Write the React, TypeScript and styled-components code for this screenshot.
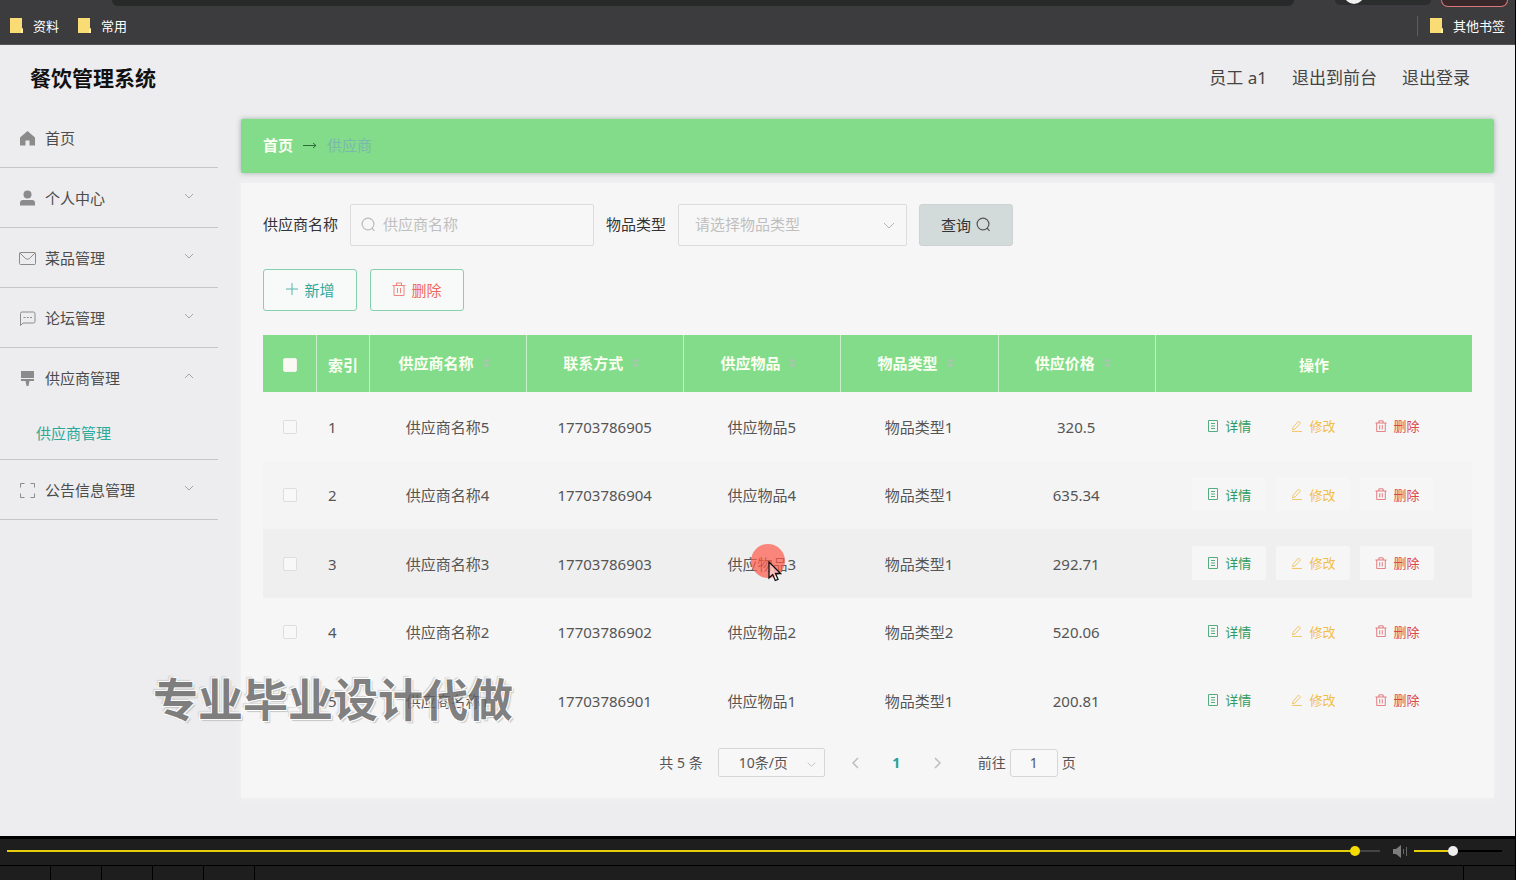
import React from 'react';
import styled, { createGlobalStyle, css } from 'styled-components';

const GlobalStyle = createGlobalStyle`
  *, *::before, *::after { box-sizing: border-box; }
  body { margin: 0; background: #edecee; }
  body, button, input, select {
    font-family: "Noto Sans", "Noto Sans CJK SC", sans-serif;
    font-size: 15px;
    color: #555;
  }
  button, a, select { cursor: pointer; }
  a { color: inherit; text-decoration: none; }
`;

const Screen = styled.div`
  display: flex;
  flex-direction: column;
  min-height: 100vh;
  border-right: 1px solid #000;
`;

/* ---------- browser bar ---------- */

const Browser = styled.header`
  background: #3c3b3d;
  border-bottom: 1px solid #555456;
`;

const AddressRow = styled.div`
  display: flex;
  align-items: flex-start;
  height: 7px;
  padding: 0 7px 0 112px;
  overflow: hidden;
`;

const AddressBar = styled.div`
  flex: 1;
  height: 6px;
  border-radius: 0 0 10px 10px;
  background: #282929;
`;

const ProfilePill = styled.div`
  display: flex;
  width: 96px;
  height: 5px;
  margin: 0 10px 0 41px;
  border-radius: 0 0 10px 10px;
  background: #2c2d2d;
`;

const Avatar = styled.span`
  width: 20px;
  height: 20px;
  margin: -16px 0 0 9px;
  border-radius: 50%;
  background: #f1f1f1;
`;

const UpdatePill = styled.div`
  width: 67px;
  height: 7px;
  border: 1px solid #d9777a;
  border-top: 0;
  border-radius: 0 0 12px 12px;
  background: #38282a;
`;

const Bookmarks = styled.nav`
  display: flex;
  align-items: center;
  gap: 19px;
  height: 37px;
  padding: 0 10px;
`;

const Bookmark = styled.a`
  display: flex;
  align-items: center;
  gap: 10px;
  font-size: 13px;
  line-height: 20px;
  color: #fff;
`;

const OtherBookmarks = styled.div`
  margin-left: auto;
  padding-left: 12px;
  border-left: 1px solid #5d5c5e;
`;

const FolderIcon = () => (
  <svg width="13" height="15" viewBox="0 0 13 15">
    <path d="M0 0h12v10l1 1v4H0z" fill="#f9dc74" />
    <path d="M11 12l2-2v5h-2z" fill="#fff0b0" />
  </svg>
);

/* ---------- app frame ---------- */

const Page = styled.div`
  position: relative;
  flex: 1;
  background: #edecee;
`;

const TopBar = styled.div`
  display: flex;
  align-items: center;
  justify-content: space-between;
  height: 63px;
  padding: 2px 45px 0 30px;
`;

const Title = styled.h1`
  margin: 0;
  font-size: 21px;
  line-height: 32px;
  color: #111;
`;

const UserLinks = styled.div`
  display: flex;
  gap: 25px;
  font-size: 17px;
  line-height: 24px;
  color: #444;
`;

const Columns = styled.div`
  display: flex;
  align-items: flex-start;
`;

const Sidebar = styled.nav`
  flex: 0 0 218px;
`;

const MenuGroup = styled.div`
  border-bottom: 1px solid #c6c6c7;
`;

const MenuItem = styled.a`
  display: flex;
  align-items: center;
  gap: 9px;
  height: 59px;
  padding: 0 24px 0 19px;
  color: #4c4c4c;
  line-height: 22px;

  svg:first-child { margin-top: 2px; }
`;

const MenuArrow = styled.svg<{ $open?: boolean }>`
  margin: 0 0 4px auto;
  transform: ${(p) => (p.$open ? 'rotate(180deg)' : 'none')};
`;

const SubItem = styled.a`
  display: flex;
  align-items: center;
  height: 52px;
  padding-left: 36px;
  color: #2ba99b;
  line-height: 22px;
`;

const Main = styled.main`
  flex: 1;
  min-width: 0;
  padding: 11px 21px 38px 23px;
`;

const Breadcrumb = styled.div`
  display: flex;
  align-items: center;
  gap: 10px;
  height: 54px;
  padding: 0 22px 2px;
  border-radius: 2px;
  background: #82dc8a;
  box-shadow: 0 0 5px rgba(90, 130, 110, 0.55);
  line-height: 22px;
`;

const CrumbHome = styled.a`
  font-weight: 700;
  color: #fbfff2;
`;

const CrumbCurrent = styled.span`
  color: #7cb8ad;
`;

const Panel = styled.section`
  margin-top: 10px;
  padding: 21px 22px;
  background: #f7f6f7;
  box-shadow: 0 0 6px #f4f5f5;
`;

/* ---------- filter form ---------- */

const Filters = styled.form`
  display: flex;
  flex-wrap: wrap;
  align-items: center;
  gap: 12px;
`;

const Label = styled.label`
  padding-bottom: 2px;
  line-height: 22px;
  color: #333;
`;

const boxed = css`
  height: 42px;
  border: 1px solid #dcdcde;
  border-radius: 2px;
  background: #f7f7f7;
`;

const SearchBox = styled.div`
  ${boxed}
  display: flex;
  align-items: center;
  gap: 7px;
  width: 244px;
  padding: 0 10px 2px;
`;

const SearchInput = styled.input`
  flex: 1;
  min-width: 0;
  padding: 0;
  border: 0;
  outline: 0;
  background: transparent;

  &::placeholder { color: #bfbfc0; }
`;

const SelectBox = styled.div`
  position: relative;
  display: flex;

  svg {
    position: absolute;
    right: 12px;
    top: 50%;
    margin-top: -3px;
    pointer-events: none;
  }
`;

const TypeSelect = styled.select`
  ${boxed}
  width: 229px;
  padding: 0 16px 2px;
  appearance: none;
  color: #bfbfc0;
`;

const Button = styled.button<{ $tone: 'query' | 'add' | 'remove' }>`
  display: flex;
  align-items: center;
  justify-content: center;
  gap: 5px;
  width: 94px;
  height: 42px;
  padding: 0 0 2px;
  border: 1px solid ${(p) => (p.$tone === 'query' ? '#ccd3d2' : '#86cfaf')};
  border-radius: 3px;
  background: ${(p) => (p.$tone === 'query' ? '#d3dbda' : '#f8f9f9')};
  color: ${(p) => ({ query: '#333', add: '#2fa99f', remove: '#ee6a5f' })[p.$tone]};
`;

const Toolbar = styled.div`
  display: flex;
  gap: 13px;
  margin: 23px 0 24px;
`;

/* ---------- table ---------- */

const Table = styled.table`
  width: 100%;
  border-collapse: separate;
  border-spacing: 0;
  table-layout: fixed;
  text-align: center;
`;

const NarrowCol = styled.col`
  width: 53px;
`;

const DataCol = styled.col`
  width: 13%;
`;

const HeadCell = styled.th<{ $sortable?: boolean }>`
  height: 57px;
  padding: ${(p) => (p.$sortable ? '0 0 2px' : '2px 0 0')};
  border-left: 1px solid #c9f0cd;
  background: #82dc8a;
  color: #fbfff2;
  line-height: 22px;

  &:first-child { border-left: 0; }
`;

const HeadLabel = styled.span`
  display: inline-flex;
  align-items: center;

  svg { margin: 0 7px 0 8px; }
`;

const Row = styled.tr<{ $hovered?: boolean }>`
  height: 68px;
  background: ${(p) => (p.$hovered ? '#efeff0' : '#f7f6f7')};

  &:nth-child(odd) { height: 69px; }
  &:nth-child(2) { background: #f4f4f4; }
`;

const Cell = styled.td<{ $left?: boolean }>`
  position: relative;
  padding: ${(p) => (p.$left ? '0 0 0 12px' : '0')};
  text-align: ${(p) => (p.$left ? 'left' : 'center')};
  line-height: 22px;
`;

const Checkbox = styled.input<{ $solid?: boolean }>`
  display: block;
  width: 14px;
  height: 14px;
  margin: 0 auto;
  appearance: none;
  border: 1px solid ${(p) => (p.$solid ? '#f3f3ee' : '#dededf')};
  border-radius: 2px;
  background: ${(p) => (p.$solid ? '#fbf9f4' : '#f8f8f8')};
`;

const Actions = styled.div`
  display: flex;
  justify-content: center;
  gap: 10px;
  padding-bottom: 2px;
`;

const ActionButton = styled.button<{ $color: string }>`
  display: flex;
  align-items: center;
  gap: 6px;
  height: 34px;
  padding: 0 15px;
  border: 0;
  border-radius: 3px;
  background: #f7f6f7;
  color: ${(p) => p.$color};
  font-size: 13px;
`;

const Pointer = styled.span`
  position: absolute;
  left: 50%;
  top: 50%;
  width: 34px;
  height: 34px;
  margin: -20px 0 0 -11px;
  border-radius: 50%;
  background: rgba(255, 88, 72, 0.7);
  pointer-events: none;

  svg { position: absolute; left: 17px; top: 17px; }
`;

/* ---------- pagination ---------- */

const Pagination = styled.div`
  display: flex;
  align-items: center;
  justify-content: center;
  margin-top: 13px;
  font-size: 14px;
  line-height: 20px;
`;

const SizeBox = styled(SelectBox)`
  margin: 0 10px 0 15px;

  svg { right: 9px; margin-top: -2px; }
`;

const SizeSelect = styled.select`
  width: 107px;
  height: 29px;
  padding: 0 20px;
  appearance: none;
  border: 1px solid #d6d6d8;
  border-radius: 2px;
  background: #f7f7f7;
  font-size: 14px;
`;

const PageButton = styled.button`
  display: flex;
  align-items: center;
  justify-content: center;
  width: 41px;
  height: 28px;
  padding: 0;
  border: 0;
  background: transparent;
  font-size: 14px;
  font-weight: 700;
  color: #1aa596;
`;

const JumpLabel = styled.label`
  display: flex;
  align-items: center;
  gap: 4px;
  margin-left: 20px;
`;

const JumpInput = styled.input`
  width: 48px;
  height: 28px;
  padding: 0;
  border: 1px solid #d6d6d8;
  border-radius: 3px;
  background: #f8f8f8;
  font-size: 14px;
  text-align: center;
`;

const Watermark = styled.div`
  position: absolute;
  left: 153px;
  bottom: 103px;
  font-size: 45px;
  font-weight: 700;
  line-height: 66px;
  white-space: nowrap;
  color: #636363;
  opacity: 0.8;
  pointer-events: none;
  text-shadow: 1px 1px 0 #fff, -1px 1px 0 #fff, 1px -1px 0 #fff, -1px -1px 0 #fff,
    2px 2px 1px #bbb, -2px -2px 1px #ccc;
`;

/* ---------- video player ---------- */

const Player = styled.footer`
  border-top: 3px solid #000;
  background: #1e1e1e;
`;

const Controls = styled.div`
  display: flex;
  align-items: center;
  height: 27px;
  padding: 0 13px 2px 7px;
  border-bottom: 1px solid #000;
`;

const Slider = styled.input<{ $fill: string; $rest: string; $knob: string }>`
  height: 12px;
  margin: 0;
  appearance: none;
  background: linear-gradient(${(p) => p.$fill}, ${(p) => p.$fill}) 0 50% / ${(p) => p.value}% 2px no-repeat,
    linear-gradient(${(p) => p.$rest}, ${(p) => p.$rest}) 0 50% / 100% 2px no-repeat;

  &::-webkit-slider-thumb {
    appearance: none;
    width: 10px;
    height: 10px;
    border-radius: 50%;
    background: ${(p) => p.$knob};
  }
`;

const Progress = styled(Slider)`
  flex: 1;
`;

const Volume = styled(Slider)`
  width: 88px;
`;

const Speaker = styled.svg`
  margin: 0 6px 0 13px;
`;

const Strip = styled.div`
  display: flex;
  height: 14px;
`;

const StripCell = styled.span<{ $wide?: boolean }>`
  flex: ${(p) => (p.$wide ? '1' : '0 0 51px')};
  border-right: 1px solid #000;

  &:last-child { border-right: 0; }
`;

/* ---------- icons ---------- */

const Chevron = ({ size = 12, color = '#b5b5b6' }: { size?: number; color?: string }) => (
  <svg width={size} height="7" viewBox="0 0 12 7" fill="none" stroke={color}>
    <path d="M1 1l5 5 5-5" />
  </svg>
);

const SearchIcon = ({ color }: { color: string }) => (
  <svg width="15" height="15" viewBox="0 0 15 15" fill="none" stroke={color} strokeWidth="1.2">
    <circle cx="7" cy="7" r="5.9" />
    <path d="M11 11l2.5 2.8" />
  </svg>
);

const TrashIcon = ({ size = 14 }: { size?: number }) => (
  <svg width={size} height={size} viewBox="0 0 14 14" fill="none" stroke="currentColor" opacity="0.8">
    <path d="M.5 3.5h13M4.5 3.500v-2.500h5v2.500M2 3.500v10h10v-10M5.500 6v5M8.500 6v5" />
  </svg>
);

const PlusIcon = () => (
  <svg width="14" height="14" viewBox="0 0 14 14" stroke="currentColor" opacity="0.8">
    <path d="M7 1v12M1 7h12" />
  </svg>
);

const DetailIcon = () => (
  <svg width="12" height="12" viewBox="0 0 12 12" fill="none" stroke="currentColor" opacity="0.8">
    <path d="M1.500.5h9v11h-9zM4 3.500h4M4 6h4M4 8.500h4" />
  </svg>
);

const EditIcon = () => (
  <svg width="12" height="12" viewBox="0 0 12 12" fill="none" stroke="currentColor" opacity="0.8">
    <path d="M7.500 1l2 2-5.500 6-2.500.8.6-2.600zM1 11.500h10" />
  </svg>
);

const SortIcon = () => (
  <svg width="9" height="12" viewBox="0 0 9 12" fill="#a9c6ae">
    <path d="M4.500 1L8 5H1zM4.500 11L8 7H1z" />
  </svg>
);

const menuIcons: Record<string, React.ReactNode> = {
  home: <path fill="#8b8b8c" d="M8.500 1L1 7.500V15.500h5.500v-5h4v5H16V7.500z" />,
  user: (
    <g fill="#8b8b8c">
      <circle cx="8.500" cy="4.500" r="4" />
      <path d="M1 15.500v-2.500q0-3 3-3h9q3 0 3 3v2.500z" />
    </g>
  ),
  mail: (
    <g fill="none" stroke="#8b8b8c">
      <rect x=".5" y="2.500" width="16" height="12" rx="1" />
      <path d="M1 3l5.500 5.500q2 1.500 4 0L16 3" />
    </g>
  ),
  chat: (
    <g fill="none" stroke="#8b8b8c">
      <path d="M1.500 15.500v-12q0-1.500 1.500-1.500h11.500q1.500 0 1.500 1.500v8q0 1.500-1.500 1.500H4z" />
      <path d="M4.500 7.500h2M7.800 7.500h2M11 7.500h2" />
    </g>
  ),
  brush: <path fill="#8b8b8c" d="M2 1h13v7H2zM2 9h13v2h-4.500l-1 5h-2l-1-5H2z" />,
  frame: (
    <path
      fill="none"
      stroke="#8b8b8c"
      d="M1.500 5.500V1.500h4M11.500 1.500h4v4M15.500 11.500v4h-4M5.500 15.500h-4v-4"
    />
  ),
};

const MenuIcon = ({ name }: { name: string }) => (
  <svg width="17" height="17" viewBox="0 0 17 17">
    {menuIcons[name]}
  </svg>
);

/* ---------- data ---------- */

const menu = [
  { icon: 'home', text: '首页', arrow: false },
  { icon: 'user', text: '个人中心', arrow: true },
  { icon: 'mail', text: '菜品管理', arrow: true },
  { icon: 'chat', text: '论坛管理', arrow: true },
  { icon: 'brush', text: '供应商管理', arrow: true, children: ['供应商管理'] },
  { icon: 'frame', text: '公告信息管理', arrow: true },
];

const columns = ['供应商名称', '联系方式', '供应物品', '物品类型', '供应价格'];

const rows = [
  ['供应商名称5', '17703786905', '供应物品5', '物品类型1', '320.5'],
  ['供应商名称4', '17703786904', '供应物品4', '物品类型1', '635.34'],
  ['供应商名称3', '17703786903', '供应物品3', '物品类型1', '292.71'],
  ['供应商名称2', '17703786902', '供应物品2', '物品类型2', '520.06'],
  ['供应商名称1', '17703786901', '供应物品1', '物品类型1', '200.81'],
];

const hoveredRow = 2;

export default function App() {
  return (
    <>
      <GlobalStyle />
      <Screen>
        <Browser>
          <AddressRow>
            <AddressBar />
            <ProfilePill>
              <Avatar />
            </ProfilePill>
            <UpdatePill />
          </AddressRow>
          <Bookmarks>
            <Bookmark href="#"><FolderIcon />资料</Bookmark>
            <Bookmark href="#"><FolderIcon />常用</Bookmark>
            <OtherBookmarks>
              <Bookmark href="#"><FolderIcon />其他书签</Bookmark>
            </OtherBookmarks>
          </Bookmarks>
        </Browser>

        <Page>
          <TopBar>
            <Title>餐饮管理系统</Title>
            <UserLinks>
              <span>员工 a1</span>
              <a href="#">退出到前台</a>
              <a href="#">退出登录</a>
            </UserLinks>
          </TopBar>

          <Columns>
            <Sidebar>
              {menu.map((item) => (
                <MenuGroup key={item.text}>
                  <MenuItem href="#">
                    <MenuIcon name={item.icon} />
                    {item.text}
                    {item.arrow && (
                      <MenuArrow
                        $open={!!item.children}
                        width="10"
                        height="6"
                        viewBox="0 0 10 6"
                        fill="none"
                        stroke="#a5a5a6"
                      >
                        <path d="M1 1l4 4 4-4" />
                      </MenuArrow>
                    )}
                  </MenuItem>
                  {item.children?.map((child) => (
                    <SubItem href="#" key={child}>{child}</SubItem>
                  ))}
                </MenuGroup>
              ))}
            </Sidebar>

            <Main>
              <Breadcrumb>
                <CrumbHome href="#">首页</CrumbHome>
                <svg width="14" height="8" viewBox="0 0 14 8" fill="none" stroke="#2f6b3a">
                  <path d="M0 4.500h13M10 2l3 2.500-3 2.500" />
                </svg>
                <CrumbCurrent>供应商</CrumbCurrent>
              </Breadcrumb>

              <Panel>
                <Filters>
                  <Label htmlFor="supplier">供应商名称</Label>
                  <SearchBox>
                    <SearchIcon color="#bdbdbe" />
                    <SearchInput id="supplier" type="text" placeholder="供应商名称" />
                  </SearchBox>
                  <Label htmlFor="type">物品类型</Label>
                  <SelectBox>
                    <TypeSelect id="type" defaultValue="">
                      <option value="">请选择物品类型</option>
                      <option>物品类型1</option>
                      <option>物品类型2</option>
                    </TypeSelect>
                    <Chevron />
                  </SelectBox>
                  <Button type="button" $tone="query">
                    查询
                    <SearchIcon color="#555" />
                  </Button>
                </Filters>

                <Toolbar>
                  <Button type="button" $tone="add"><PlusIcon />新增</Button>
                  <Button type="button" $tone="remove"><TrashIcon />删除</Button>
                </Toolbar>

                <Table>
                  <colgroup>
                    <NarrowCol />
                    <NarrowCol />
                    {columns.map((c) => <DataCol key={c} />)}
                    <col />
                  </colgroup>
                  <thead>
                    <tr>
                      <HeadCell>
                        <Checkbox type="checkbox" $solid aria-label="全选" />
                      </HeadCell>
                      <HeadCell>索引</HeadCell>
                      {columns.map((c) => (
                        <HeadCell key={c} $sortable>
                          <HeadLabel>{c}<SortIcon /></HeadLabel>
                        </HeadCell>
                      ))}
                      <HeadCell>操作</HeadCell>
                    </tr>
                  </thead>
                  <tbody>
                    {rows.map((row, i) => (
                      <Row key={row[0]} $hovered={i === hoveredRow}>
                        <Cell>
                          <Checkbox type="checkbox" aria-label={row[0]} />
                        </Cell>
                        <Cell $left>{i + 1}</Cell>
                        {row.map((value, j) => (
                          <Cell key={j}>
                            {value}
                            {i === hoveredRow && j === 2 && (
                              <Pointer>
                                <svg width="14" height="21" viewBox="0 0 14 21">
                                  <path
                                    d="M1 1v16l3.700-3.500 2.600 6 2.700-1.200-2.500-5.800H12.500z"
                                    fill="#fff"
                                    fillOpacity="0.5"
                                    stroke="#111"
                                    strokeWidth="1.300"
                                  />
                                </svg>
                              </Pointer>
                            )}
                          </Cell>
                        ))}
                        <Cell>
                          <Actions>
                            <ActionButton type="button" $color="#2f9a60"><DetailIcon />详情</ActionButton>
                            <ActionButton type="button" $color="#f2bd45"><EditIcon />修改</ActionButton>
                            <ActionButton type="button" $color="#d9484b"><TrashIcon size={12} />删除</ActionButton>
                          </Actions>
                        </Cell>
                      </Row>
                    ))}
                  </tbody>
                </Table>

                <Pagination>
                  <span>共 5 条</span>
                  <SizeBox>
                    <SizeSelect aria-label="每页条数" defaultValue="10">
                      <option value="10">10条/页</option>
                      <option value="20">20条/页</option>
                    </SizeSelect>
                    <Chevron size={9} />
                  </SizeBox>
                  <PageButton type="button" aria-label="上一页">
                    <svg width="7" height="12" viewBox="0 0 7 12" fill="none" stroke="#bcbcbd" strokeWidth="1.500">
                      <path d="M6 1L1 6l5 5" />
                    </svg>
                  </PageButton>
                  <PageButton type="button">1</PageButton>
                  <PageButton type="button" aria-label="下一页">
                    <svg width="7" height="12" viewBox="0 0 7 12" fill="none" stroke="#bcbcbd" strokeWidth="1.500">
                      <path d="M1 1l5 5-5 5" />
                    </svg>
                  </PageButton>
                  <JumpLabel>
                    前往
                    <JumpInput type="text" defaultValue="1" />
                    页
                  </JumpLabel>
                </Pagination>
              </Panel>
            </Main>
          </Columns>

          <Watermark>专业毕业设计代做</Watermark>
        </Page>

        <Player>
          <Controls>
            <Progress
              type="range" readOnly step="0.5" value={98.5} aria-label="进度"
              $fill="#e5cd0b" $rest="#444" $knob="#f5dc00"
            />
            <Speaker width="15" height="13" viewBox="0 0 15 13">
              <path d="M0 4h3l5-4v13L3 9H0z" fill="#7d7d7d" />
              <path d="M10.500 4v5M13.500 2v9" stroke="#666" />
            </Speaker>
            <Volume
              type="range" readOnly value={44} aria-label="音量"
              $fill="#e5cd0b" $rest="#000" $knob="#eee"
            />
          </Controls>
          <Strip>
            <StripCell />
            <StripCell />
            <StripCell />
            <StripCell />
            <StripCell />
            <StripCell $wide />
            <StripCell />
          </Strip>
        </Player>
      </Screen>
    </>
  );
}
